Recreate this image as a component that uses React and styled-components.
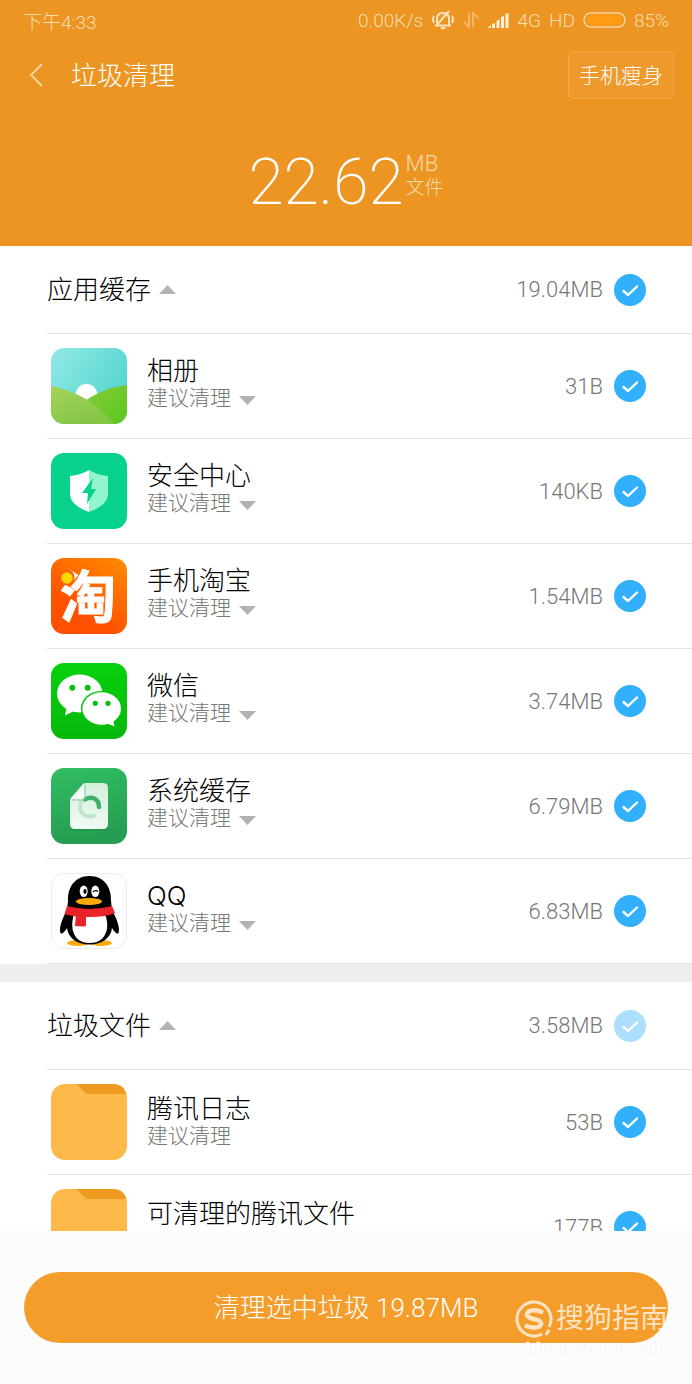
import React, { useState } from "react";
import styled, { createGlobalStyle, ThemeProvider } from "styled-components";

const theme = {
  header: "#ec9523",
  action: "#f59d2b",
  check: "#33b0fd",
  text: "#000",
  muted: "#777",
  arrow: "#b2b2b2",
  line: "#e2e2e2"
};

const GlobalStyle = createGlobalStyle`
  * {
    box-sizing: border-box;
  }

  body {
    margin: 0;
    background: #fff;
    font-family: Roboto, "Noto Sans CJK SC", sans-serif;
    font-weight: 300;
  }

  button {
    padding: 0;
    border: 0;
    background: none;
    color: inherit;
    font: inherit;
    cursor: pointer;
  }
`;

const Page = styled.div`
  position: relative;
  display: flex;
  flex-direction: column;
  height: 100vh;
`;

const Header = styled.header`
  flex: none;
  background: ${props => props.theme.header};
  color: #fff;
`;

const StatusBar = styled.div`
  display: flex;
  align-items: center;
  justify-content: space-between;
  height: 40px;
  padding: 0 23px;
  color: #fbdcae;
  font-size: 19px;
`;

const StatusItems = styled.div`
  display: flex;
  align-items: center;
  gap: 8px;
`;

const StatusIcon = styled.svg`
  display: block;
  flex: none;
`;

const NavBar = styled.nav`
  display: flex;
  align-items: center;
  height: 70px;
  padding: 0 18px 0 24px;
`;

const BackButton = styled.button`
  display: flex;
  width: 47px;
`;

const Heading = styled.h1`
  flex: 1;
  margin: 0;
  padding-bottom: 4px;
  font-size: 26px;
  font-weight: 300;
`;

const SlimButton = styled.button`
  && {
    height: 48px;
    padding: 0 10px 3px;
    border: 1px solid #f2a94c;
    border-radius: 5px;
    background: #ee992c;
    font-size: 21px;
  }
`;

const Summary = styled.div`
  display: flex;
  justify-content: center;
  gap: 2px;
  height: 136px;
  padding-top: 35px;
`;

const Total = styled.span`
  font-size: 64px;
  font-weight: 200;
  line-height: 76px;
`;

const Units = styled.span`
  display: flex;
  flex-direction: column;
  padding-top: 7px;
  color: #fbd9a8;
  font-size: 22px;
  line-height: 24px;
`;

const UnitLabel = styled.span`
  font-size: 19px;
`;

const List = styled.main`
  flex: 1;
  min-height: 0;
  overflow-y: auto;
  scrollbar-width: none;
`;

const Section = styled.section`
  & + & {
    border-top: 18px solid #eee;
  }
`;

const Line = styled.div`
  display: flex;
  align-items: center;
  height: ${props => (props.$head ? "88px" : "105px")};
  margin-left: 47px;
  padding: 0 46px 0 ${props => (props.$head ? "0" : "4px")};
  border-bottom: 1px solid ${props => props.theme.line};
`;

const SectionTitle = styled.h2`
  flex: 1;
  margin: 0;
  padding-bottom: 4px;
  color: ${props => props.theme.text};
  font-size: 26px;
  font-weight: 300;
`;

const Toggle = styled.button`
  display: flex;
  align-items: center;
  gap: 8px;
`;

const Arrow = styled.svg`
  display: block;
  width: 17px;
  height: 9px;
  margin-top: 4px;
  fill: ${props => props.theme.arrow};
`;

const AppIcon = styled.svg`
  flex: none;
  display: block;
  width: 76px;
  height: 76px;
  margin-right: 20px;
  overflow: visible;
`;

const Info = styled.div`
  flex: 1;
  display: flex;
  flex-direction: column;
  align-items: flex-start;
  min-height: 54px;
  padding-bottom: ${props => (props.$more ? "4px" : "0")};
`;

const Name = styled.span`
  color: ${props => props.theme.text};
  font-family: Inter, "Noto Sans CJK SC", sans-serif;
  font-size: 26px;
  line-height: 28px;
`;

const Hint = styled.span`
  color: ${props => props.theme.muted};
  font-size: 21px;
  line-height: 26px;
`;

const Size = styled.span`
  margin-right: 11px;
  color: ${props => props.theme.muted};
  font-size: 22px;
`;

const CheckWrap = styled.label`
  display: grid;
  width: 32px;
  height: 32px;
  opacity: ${props => (props.$faded ? 0.4 : 1)};
  cursor: pointer;

  > * {
    grid-area: 1 / 1;
  }
`;

const CheckInput = styled.input`
  appearance: none;
  width: 32px;
  height: 32px;
  margin: 0;
  border: 1px solid #ccc;
  border-radius: 50%;

  &:checked {
    border: 0;
    background: ${props => props.theme.check};
  }
`;

const CheckMark = styled.svg`
  pointer-events: none;
`;

const Footer = styled.footer`
  flex: none;
  padding: 41px 24px;
  background: #fcfcfc;
`;

const CleanButton = styled.button`
  && {
    width: 100%;
    height: 71px;
    padding-bottom: 5px;
    border-radius: 36px;
    background: ${props => props.theme.action};
    color: #fff;
    font-size: 26px;
  }
`;

const Watermark = styled.div`
  position: absolute;
  right: 24px;
  bottom: 25px;
  display: flex;
  flex-direction: column;
  color: rgba(255, 255, 255, 0.72);
  pointer-events: none;
`;

const Brand = styled.div`
  display: flex;
  align-items: center;
  gap: 3px;
  font-size: 28px;
  font-weight: 400;
  line-height: 40px;
`;

const Site = styled.span`
  color: #fff;
  font-family: "Liberation Sans", sans-serif;
  font-size: 17px;
  font-weight: 700;
  line-height: 20px;
  text-align: center;
  text-shadow: 0 0 2px #ebebeb;
`;

const AlbumIcon = () => (
  <AppIcon viewBox="0 0 76 76" aria-hidden="true">
    <defs>
      <clipPath id="tile">
        <rect width="76" height="76" rx="13" />
      </clipPath>
      <linearGradient id="sky" x1="0" y1="0" x2="1" y2="0.6">
        <stop offset="0" stopColor="#93e9e4" />
        <stop offset="1" stopColor="#52d5cf" />
      </linearGradient>
      <linearGradient id="hill" x1="0" y1="0" x2="0.5" y2="1">
        <stop offset="0" stopColor="#a5d35b" />
        <stop offset="1" stopColor="#85c646" />
      </linearGradient>
      <linearGradient id="hillBack" x1="0" y1="0" x2="1" y2="1">
        <stop offset="0" stopColor="#86cd3c" />
        <stop offset="1" stopColor="#5cc71f" />
      </linearGradient>
    </defs>
    <g clipPath="url(#tile)">
      <rect width="76" height="76" fill="url(#sky)" />
      <circle cx="35.500" cy="47" r="11" fill="#fff" />
      <path d="M30 56Q50 40 76 37V76H30Z" fill="url(#hillBack)" />
      <path d="M0 38Q40 46 63 76H0Z" fill="url(#hill)" />
    </g>
  </AppIcon>
);

const SecurityIcon = () => (
  <AppIcon viewBox="0 0 76 76" aria-hidden="true">
    <rect width="76" height="76" rx="13" fill="#07d28c" />
    <path d="M38 17Q46 22 57 23V41Q57 52 38 59Z" fill="#93f5cd" />
    <path d="M38 17Q30 22 19 23V41Q19 52 38 59Z" fill="#fff" />
    <path d="M42 25L31 40H37L36 51L45 36H40Z" fill="#07d28c" />
  </AppIcon>
);

const TaobaoIcon = () => (
  <AppIcon viewBox="0 0 76 76" aria-hidden="true">
    <defs>
      <linearGradient id="taobao" x1="1" y1="0" x2="0.5" y2="0.8">
        <stop offset="0" stopColor="#ff8c00" />
        <stop offset="1" stopColor="#ff5000" />
      </linearGradient>
    </defs>
    <rect width="76" height="76" rx="13" fill="url(#taobao)" />
    <text
      x="37"
      y="59"
      fill="#fff"
      stroke="#fff"
      strokeWidth="1"
      strokeLinejoin="round"
      fontFamily="Noto Sans CJK SC, sans-serif"
      fontSize="56"
      fontWeight="700"
      textAnchor="middle"
    >
      淘
    </text>
    <circle cx="16" cy="19" r="7.500" fill="#ff6000" />
    <circle cx="16" cy="20" r="5.700" fill="#ffd800" />
  </AppIcon>
);

const WechatIcon = () => (
  <AppIcon viewBox="0 0 76 76" aria-hidden="true">
    <defs>
      <linearGradient id="wechat" x1="0" y1="0" x2="0" y2="1">
        <stop offset="0" stopColor="#06d10c" />
        <stop offset="1" stopColor="#06b80c" />
      </linearGradient>
    </defs>
    <rect width="76" height="76" rx="13" fill="url(#wechat)" />
    <ellipse cx="28.700" cy="30.500" rx="22.700" ry="19" fill="#fff" />
    <path d="M16 43L14 52.500L24 47.500Z" fill="#fff" />
    <ellipse cx="50.700" cy="45.500" rx="20.800" ry="17.600" fill="#06c30c" />
    <ellipse cx="50.700" cy="45.500" rx="19.300" ry="16.200" fill="#fff" />
    <path d="M55 60L63.500 63.500L62 56Z" fill="#fff" />
    <g fill="#06c00c">
      <circle cx="21.300" cy="24.700" r="3" />
      <circle cx="36.700" cy="24.700" r="3" />
      <circle cx="44.300" cy="40.300" r="2.600" />
      <circle cx="57" cy="40.300" r="2.600" />
    </g>
  </AppIcon>
);

const CacheIcon = () => (
  <AppIcon viewBox="0 0 76 76" aria-hidden="true">
    <defs>
      <linearGradient id="cache" x1="0" y1="0" x2="0.2" y2="1">
        <stop offset="0" stopColor="#32bd61" />
        <stop offset="1" stopColor="#259d52" />
      </linearGradient>
      <linearGradient id="sheet" x1="0.8" y1="0" x2="0.6" y2="1">
        <stop offset="0" stopColor="#d3f0dc" />
        <stop offset="1" stopColor="#effaf2" />
      </linearGradient>
      <linearGradient id="fold" x1="0.2" y1="0.2" x2="1" y2="1">
        <stop offset="0" stopColor="#e3f5e8" />
        <stop offset="1" stopColor="#fff" />
      </linearGradient>
    </defs>
    <rect width="76" height="76" rx="13" fill="url(#cache)" />
    <path
      d="M34 17H52Q57 17 57 22V59Q57 63 52 63H24Q19 63 19 59V32Z"
      fill="#1f8c47"
      opacity="0.4"
    />
    <path
      d="M34 15H52Q57 15 57 20V56Q57 61 52 61H24Q19 61 19 56V32Z"
      fill="url(#sheet)"
    />
    <path
      d="M30 34Q27 43 34 47.500Q39 49.500 43 47.500"
      fill="none"
      stroke="#bfe6cc"
      strokeWidth="4"
      strokeLinecap="round"
    />
    <path
      d="M34 31.500C40 27.500 48 30.500 48 39"
      fill="none"
      stroke="#41ae6a"
      strokeWidth="4.500"
      strokeLinecap="round"
    />
    <path d="M35 16V29Q35 33 31 33H20Z" fill="#8fcfa4" opacity="0.6" />
    <path d="M33 15V28Q33 31 30 31H19Z" fill="url(#fold)" />
  </AppIcon>
);

const QQIcon = () => (
  <AppIcon viewBox="0 0 76 76" aria-hidden="true">
    <rect
      x="0.500"
      y="0.500"
      width="75"
      height="75"
      rx="13"
      fill="#fff"
      stroke="#ececec"
    />
    <ellipse cx="27" cy="70" rx="11" ry="3" fill="#faab07" />
    <ellipse cx="50" cy="70" rx="11" ry="3" fill="#faab07" />
    <path
      d="M38.500 3C24 3 16.500 14 17 28L16 37C10 48 8 56 9.500 60C11 62 14 58 16 55C17 65 26 71.500 38.500 71.500S60 65 61 55C63 58 66 62 67.500 60C69 56 67 48 61 37L60 28C60.500 14 53 3 38.500 3Z"
      fill="#000"
    />
    <path
      d="M23 41H54Q57 49 56 56Q53 70 38.700 70T21.500 56Q20.500 49 23 41Z"
      fill="#fff"
    />
    <path
      d="M16 33Q38.500 39 61 33L64 40Q56 44 38.500 44T13.500 41Z"
      fill="#e92227"
    />
    <path d="M25 41L35 43V52Q35 53.500 32 53.500L24 53Z" fill="#e92227" />
    <ellipse cx="32.700" cy="18.300" rx="4" ry="5.800" fill="#fff" />
    <ellipse cx="44.300" cy="18.300" rx="4" ry="5.800" fill="#fff" />
    <ellipse cx="34" cy="18.500" rx="1.600" ry="2.400" fill="#000" />
    <path
      d="M42 19Q44.500 16.500 47 18.500"
      fill="none"
      stroke="#000"
      strokeWidth="1.200"
    />
    <ellipse cx="38" cy="28.500" rx="13" ry="3.500" fill="#faab07" />
  </AppIcon>
);

const FolderIcon = () => (
  <AppIcon viewBox="0 0 76 76" aria-hidden="true">
    <rect width="76" height="76" rx="14" fill="#fdba4a" />
    <path d="M25 0H62Q73 0 75 10H38Q35.500 10 34 8.500Z" fill="#ed9a20" />
  </AppIcon>
);

const hint = "建议清理";

const sections = [
  {
    title: "应用缓存",
    size: "19.04MB",
    items: [
      { name: "相册", size: "31B", icon: AlbumIcon, hint, more: true },
      { name: "安全中心", size: "140KB", icon: SecurityIcon, hint, more: true },
      { name: "手机淘宝", size: "1.54MB", icon: TaobaoIcon, hint, more: true },
      { name: "微信", size: "3.74MB", icon: WechatIcon, hint, more: true },
      { name: "系统缓存", size: "6.79MB", icon: CacheIcon, hint, more: true },
      { name: "QQ", size: "6.83MB", icon: QQIcon, hint, more: true }
    ]
  },
  {
    title: "垃圾文件",
    size: "3.58MB",
    partial: true,
    items: [
      { name: "腾讯日志", size: "53B", icon: FolderIcon, hint },
      { name: "可清理的腾讯文件", size: "177B", icon: FolderIcon }
    ]
  }
];

const Check = ({ label, faded }) => (
  <CheckWrap $faded={faded}>
    <CheckInput type="checkbox" defaultChecked aria-label={label} />
    <CheckMark viewBox="0 0 32 32" aria-hidden="true">
      <path
        d="M9.500 17L14 21L23 12.500"
        fill="none"
        stroke="#fff"
        strokeWidth="2.400"
        strokeLinecap="round"
        strokeLinejoin="round"
      />
    </CheckMark>
  </CheckWrap>
);

const ArrowUp = () => (
  <Arrow viewBox="0 0 17 9" aria-hidden="true">
    <path d="M0 9L8.500 0L17 9Z" />
  </Arrow>
);

const ArrowDown = () => (
  <Arrow viewBox="0 0 17 9" aria-hidden="true">
    <path d="M0 0H17L8.500 9Z" />
  </Arrow>
);

const Row = ({ item }) => {
  const Icon = item.icon;
  return (
    <Line>
      <Icon />
      <Info $more={item.more}>
        <Name>{item.name}</Name>
        {item.more ? (
          <Toggle>
            <Hint>{item.hint}</Hint>
            <ArrowDown />
          </Toggle>
        ) : (
          item.hint && <Hint>{item.hint}</Hint>
        )}
      </Info>
      <Size>{item.size}</Size>
      <Check label={item.name} />
    </Line>
  );
};

const Group = ({ section }) => {
  const [open, setOpen] = useState(true);
  return (
    <Section>
      <Line $head>
        <SectionTitle>
          <Toggle aria-expanded={open} onClick={() => setOpen(!open)}>
            {section.title}
            {open ? <ArrowUp /> : <ArrowDown />}
          </Toggle>
        </SectionTitle>
        <Size>{section.size}</Size>
        <Check label={section.title} faded={section.partial} />
      </Line>
      {open && section.items.map(item => <Row key={item.name} item={item} />)}
    </Section>
  );
};

const Status = () => (
  <StatusBar>
    <span>下午4:33</span>
    <StatusItems>
      <span>0.00K/s</span>
      <StatusIcon width="24" height="20" viewBox="0 0 24 20" aria-hidden="true">
        <g fill="none" stroke="#fde3bd" strokeWidth="2">
          <path d="M6 15V9Q6 3 12 3T18 9V15M4 15.500H20" />
          <path d="M18 1L5 16" />
          <path d="M3 6Q1 9 3 13M21 6Q23 9 21 13" />
        </g>
        <path d="M9 17H15Q14 19.500 12 19.500T9 17Z" fill="#fde3bd" />
      </StatusIcon>
      <StatusIcon width="16" height="16" viewBox="0 0 16 16" aria-hidden="true">
        <path
          d="M6 1V15L1 10M10 15V1L15 6"
          fill="none"
          stroke="#f4b865"
          strokeWidth="2"
        />
      </StatusIcon>
      <StatusIcon width="22" height="16" viewBox="0 0 22 16" aria-hidden="true">
        <path
          d="M0 16L4 13.500V16ZM5 16V12L8 11V16ZM9.500 16V9L12.500 7V16ZM14 16V5L17 4V16ZM18.500 16V2L21.500 1V16Z"
          fill="#fff0d8"
        />
      </StatusIcon>
      <span>4G</span>
      <span>HD</span>
      <StatusIcon width="43" height="16" viewBox="0 0 43 16" aria-hidden="true">
        <rect
          x="1"
          y="1"
          width="41"
          height="14"
          rx="7"
          fill="none"
          stroke="#fad3a0"
          strokeWidth="1.500"
        />
        <rect x="4" y="3" width="35" height="10" rx="5" fill="#ff9c14" />
      </StatusIcon>
      <span>85%</span>
    </StatusItems>
  </StatusBar>
);

const App = () => (
  <ThemeProvider theme={theme}>
    <GlobalStyle />
    <Page lang="zh-CN">
      <Header>
        <Status />
        <NavBar>
          <BackButton aria-label="返回">
            <StatusIcon
              width="24"
              height="26"
              viewBox="0 0 24 26"
              aria-hidden="true"
            >
              <path
                d="M18 2L7 13L18 24"
                fill="none"
                stroke="#fbd7a4"
                strokeWidth="1.800"
              />
            </StatusIcon>
          </BackButton>
          <Heading>垃圾清理</Heading>
          <SlimButton>手机瘦身</SlimButton>
        </NavBar>
        <Summary>
          <Total>22.62</Total>
          <Units>
            MB
            <UnitLabel>文件</UnitLabel>
          </Units>
        </Summary>
      </Header>
      <List>
        {sections.map(section => (
          <Group key={section.title} section={section} />
        ))}
      </List>
      <Footer>
        <CleanButton>清理选中垃圾 19.87MB</CleanButton>
      </Footer>
      <Watermark>
        <Brand>
          <StatusIcon
            width="38"
            height="38"
            viewBox="0 0 38 38"
            aria-hidden="true"
          >
            <path
              d="M27 34A17 17 0 1 1 34 27"
              fill="none"
              stroke="currentColor"
              strokeWidth="3"
            />
            <path
              d="M28 12.500Q19 8.500 13.500 11.500Q9.500 15.500 15 18L23 20Q28.500 23 24.500 26.500Q18 29 10 25.500"
              fill="none"
              stroke="currentColor"
              strokeWidth="4.500"
            />
            <path d="M34 30L31 35" stroke="currentColor" strokeWidth="3" />
          </StatusIcon>
          搜狗指南
        </Brand>
        <Site>zhinan.sogou.com</Site>
      </Watermark>
    </Page>
  </ThemeProvider>
);

export default App;
